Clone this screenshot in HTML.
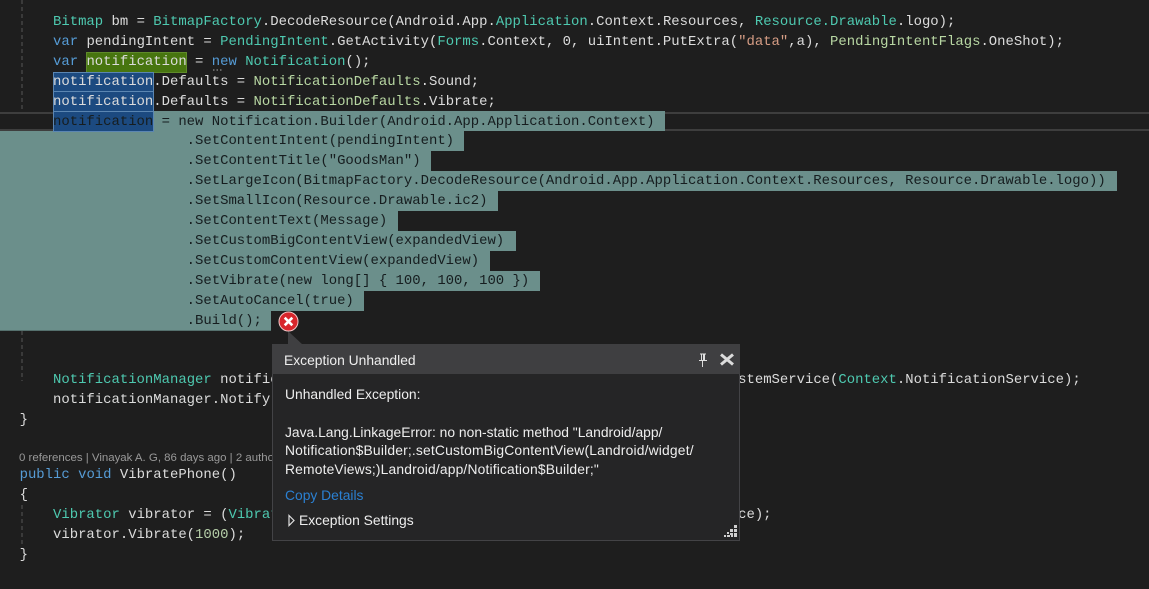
<!DOCTYPE html>
<html><head><meta charset="utf-8"><style>
html,body{margin:0;padding:0;background:#1e1e1e}
#r{position:relative;width:1149px;height:589px;overflow:hidden;background:#1e1e1e}
pre{position:absolute;left:19.6px;margin:0;height:20px;margin-top:1px;font:13.93px/20px "Liberation Mono",monospace;color:#dcdcdc;white-space:pre}
.s pre,pre.s{color:#161d1f}
i{font-style:normal}
.t{color:#4ec9b0}.k{color:#569cd6}.e{color:#b8d7a3}.q{color:#d69d85}.n{color:#b5cea8}
.b{position:absolute}
.p{position:absolute;left:285px;margin-top:0;font:13.85px/18px "Liberation Sans",sans-serif;color:#eeeeee;white-space:pre}
</style></head><body><div id="r">
<svg class="b" style="left:0;top:0" width="30" height="589"><path d="M22 0V111M22 331V381M22 505V545" stroke="#555" stroke-width="1" stroke-dasharray="4 3"/></svg>

<div class="b" style="left:0;top:112px;width:1149px;height:2px;background:#3e3e3e"></div>
<div class="b" style="left:0;top:129px;width:1149px;height:2px;background:#3e3e3e"></div>

<div class="b" style="left:153px;top:111px;width:512px;height:20px;background:#6b8f8b"></div>
<div class="b" style="left:0;top:131px;width:464px;height:20px;background:#6b8f8b"></div>
<div class="b" style="left:0;top:151px;width:431px;height:20px;background:#6b8f8b"></div>
<div class="b" style="left:0;top:171px;width:1117px;height:20px;background:#6b8f8b"></div>
<div class="b" style="left:0;top:191px;width:498px;height:20px;background:#6b8f8b"></div>
<div class="b" style="left:0;top:211px;width:398px;height:20px;background:#6b8f8b"></div>
<div class="b" style="left:0;top:231px;width:516px;height:20px;background:#6b8f8b"></div>
<div class="b" style="left:0;top:251px;width:490px;height:20px;background:#6b8f8b"></div>
<div class="b" style="left:0;top:271px;width:540px;height:20px;background:#6b8f8b"></div>
<div class="b" style="left:0;top:291px;width:364px;height:20px;background:#6b8f8b"></div>
<div class="b" style="left:0;top:311px;width:271px;height:20px;background:#6b8f8b"></div>
<div class="b" style="left:0;top:330px;width:271px;height:1px;background:#55706d"></div>

<div class="b" style="left:86px;top:52px;width:99px;height:19px;background:#47750f;border:1px solid #5f8a2a"></div>
<div class="b" style="left:53px;top:72px;width:99px;height:18px;background:#1c4a80;border:1px solid #5b86b2"></div>
<div class="b" style="left:53px;top:91px;width:99px;height:19px;background:#1c4a80;border:1px solid #5b86b2"></div>
<div class="b" style="left:53px;top:111px;width:99px;height:19px;background:#1c4a80;border:1px solid #5b86b2"></div>
<svg class="b" style="left:212px;top:69px" width="14" height="3"><path d="M1 1h10" stroke="#aaa" stroke-width="1" stroke-dasharray="1.5 2"/></svg>

<pre style="top:11px">    <i class="t">Bitmap</i> bm = <i class="t">BitmapFactory</i>.DecodeResource(Android.App.<i class="t">Application</i>.Context.Resources, <i class="t">Resource.Drawable</i>.logo);</pre>
<pre style="top:31px">    <i class="k">var</i> pendingIntent = <i class="t">PendingIntent</i>.GetActivity(<i class="t">Forms</i>.Context, 0, uiIntent.PutExtra(<i class="q">"data"</i>,a), <i class="e">PendingIntentFlags</i>.OneShot);</pre>
<pre style="top:51px">    <i class="k">var</i> notification = <i class="k">new</i> <i class="t">Notification</i>();</pre>
<pre style="top:71px">    notification.Defaults = <i class="e">NotificationDefaults</i>.Sound;</pre>
<pre style="top:91px">    notification.Defaults = <i class="e">NotificationDefaults</i>.Vibrate;</pre>
<div class="s">
<pre style="top:111px">    notification = new Notification.Builder(Android.App.Application.Context)</pre>
<pre style="top:130px">                    .SetContentIntent(pendingIntent)</pre>
<pre style="top:150px">                    .SetContentTitle("GoodsMan")</pre>
<pre style="top:170px">                    .SetLargeIcon(BitmapFactory.DecodeResource(Android.App.Application.Context.Resources, Resource.Drawable.logo))</pre>
<pre style="top:190px">                    .SetSmallIcon(Resource.Drawable.ic2)</pre>
<pre style="top:210px">                    .SetContentText(Message)</pre>
<pre style="top:230px">                    .SetCustomBigContentView(expandedView)</pre>
<pre style="top:250px">                    .SetCustomContentView(expandedView)</pre>
<pre style="top:270px">                    .SetVibrate(new long[] { 100, 100, 100 })</pre>
<pre style="top:290px">                    .SetAutoCancel(true)</pre>
<pre style="top:310px">                    .Build();</pre>
</div>
<pre style="top:369px">    <i class="t">NotificationManager</i> notificationManager = (<i class="t">NotificationManager</i>)<i class="t">Forms</i>.Context.GetSystemService(<i class="t">Context</i>.NotificationService);</pre>
<pre style="top:389px">    notificationManager.Notify(0, notification);</pre>
<pre style="top:409px">}</pre>
<div class="b" style="left:19px;top:451px;font:11.45px/14px 'Liberation Sans',sans-serif;color:#999;white-space:pre">0 references | Vinayak A. G, 86 days ago | 2 authors, 2 changes</div>
<pre style="top:464px"><i class="k">public</i> <i class="k">void</i> VibratePhone()</pre>
<pre style="top:484px">{</pre>
<pre style="top:504px">    <i class="t">Vibrator</i> vibrator = (<i class="t">Vibrator</i>)<i class="t">Forms</i>.Context.GetSystemService(<i class="t">Context</i>.VibratorService);</pre>
<pre style="top:524px">    vibrator.Vibrate(<i class="n">1000</i>);</pre>
<pre style="top:544px">}</pre>

<svg class="b" style="left:270px;top:305px" width="40" height="45"><path d="M18 26L33 40H18Z" fill="#3f3f41"/></svg>
<svg class="b" style="left:278px;top:311px" width="21" height="21"><circle cx="10.5" cy="10.5" r="9.5" fill="#d8262c" stroke="#f2c8c8" stroke-width="1"/><path d="M6.7 6.7L14.3 14.3M14.3 6.7L6.7 14.3" stroke="#fff" stroke-width="2.6"/></svg>

<div class="b" style="left:272px;top:344px;width:466px;height:196px;background:#252526;border:1px solid #434346;border-top:0"></div>
<div class="b" style="left:272px;top:344px;width:468px;height:30px;background:#3f3f41"></div>
<div class="p" style="left:284px;top:351px;">Exception Unhandled</div>
<svg class="b" style="left:695px;top:351px" width="16" height="18"><path d="M5 2.5H11V3.5H10V9H12V10H4V9H6V3.5H5Z" fill="#e0e0e0"/><path d="M7 3.5H8V9H7Z" fill="#3f3f41"/><path d="M7.5 10V16" stroke="#ddd"/></svg>
<svg class="b" style="left:719px;top:352px" width="16" height="15"><path d="M2 2.5L14 12.5M14 2.5L2 12.5" stroke="#dcdcdc" stroke-width="3"/></svg>
<div class="p" style="top:385px">Unhandled Exception:</div>
<div class="p" style="top:423px">Java.Lang.LinkageError: no non-static method "Landroid/app/</div>
<div class="p" style="top:441px;letter-spacing:.18px">Notification$Builder;.setCustomBigContentView(Landroid/widget/</div>
<div class="p" style="top:460px;letter-spacing:.16px">RemoteViews;)Landroid/app/Notification$Builder;"</div>
<div class="p" style="top:486px;color:#2b80d2">Copy Details</div>
<svg class="b" style="left:287px;top:514px" width="9" height="13"><path d="M2 1.5L7 6.5L2 11.5Z" fill="none" stroke="#e0e0e0" stroke-width="1.2"/></svg>
<div class="p" style="left:299px;top:511px">Exception Settings</div>
<svg class="b" style="left:724px;top:524px" width="14" height="14" fill="#d0d0d0"><rect x="10" y="1" width="3" height="3"/><rect x="6" y="5" width="3" height="3"/><rect x="10" y="5" width="3" height="3"/><rect x="3" y="8" width="2" height="2"/><rect x="6" y="9" width="3" height="2"/><rect x="10" y="9" width="3" height="2"/><rect x="0" y="11" width="2" height="2"/><rect x="3" y="11" width="3" height="2"/><rect x="7" y="11" width="2" height="2"/><rect x="10" y="11" width="3" height="2"/></svg>
</div></body></html>
